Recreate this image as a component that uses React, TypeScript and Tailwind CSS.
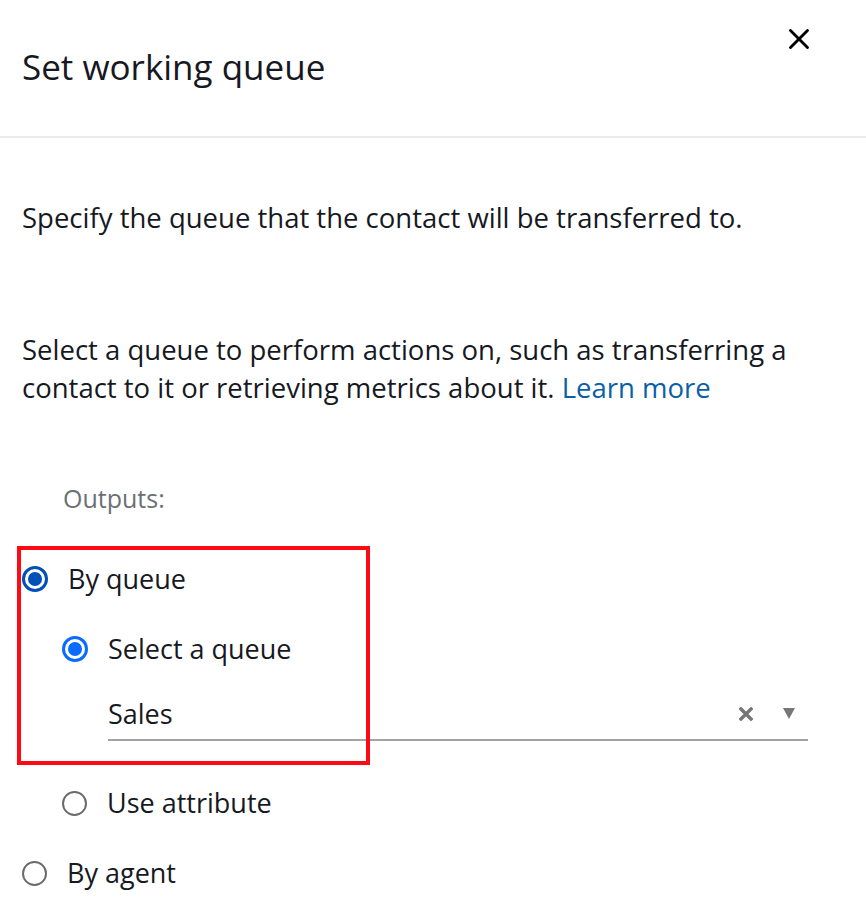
import { X } from "lucide-react";

function Radio({ checked, tone }: { checked?: boolean; tone?: "dark" | "bright" }) {
  if (!checked) {
    return <span className="block w-[25px] h-[25px] rounded-full border-2 border-[#6b6b6b] bg-white" />;
  }
  const ring = tone === "dark" ? "border-[#0050b8]" : "border-[#0a6cff]";
  const dot = tone === "dark" ? "bg-[#0050b8]" : "bg-[#0a6cff]";
  return (
    <span className={`flex items-center justify-center w-[26px] h-[26px] rounded-full border-[3px] ${ring} bg-white`}>
      <span className={`block w-[14px] h-[14px] rounded-full ${dot}`} />
    </span>
  );
}

export default function App() {
  return (
    <div className="relative w-[866px] h-[922px] bg-white text-[#16191f] overflow-hidden" style={{ fontFamily: '"Open Sans", "Noto Sans", sans-serif' }}>
      {/* header */}
      <div className="relative h-[138px] border-b-2 border-[#eaeaea] px-[22px] pt-[45px]">
        <h1 className="text-[35px] leading-[44px] font-normal">Set working queue</h1>
        <button className="absolute top-[22px] right-[50px] text-black" aria-label="Close">
          <X size={34} strokeWidth={2} />
        </button>
      </div>

      <div className="px-[22px]">
        <p className="mt-[61px] text-[27.5px] leading-[38px]">Specify the queue that the contact will be transferred to.</p>

        <p className="mt-[94px] text-[27.5px] leading-[38px]">
          Select a queue to perform actions on, such as transferring a contact to it or retrieving metrics about it.{" "}
          <a href="#" className="text-[#0a5fa6]">Learn more</a>
        </p>

        <div className="mt-[76px] pl-[41px] text-[25px] leading-[30px] text-[#6b7075]">Outputs:</div>

        <div className="mt-[46px] flex flex-col">
          <label className="flex items-center h-[40px] gap-[20px]">
            <Radio checked tone="dark" />
            <span className="text-[27px]">By queue</span>
          </label>

          <label className="mt-[30px] flex items-center h-[40px] gap-[20px] pl-[40px]">
            <Radio checked tone="bright" />
            <span className="text-[27px]">Select a queue</span>
          </label>

          <div className="mt-[20px] ml-[86px] w-[700px] h-[52px] flex items-center border-b-2 border-[#a3a3a3]">
            <span className="flex-1 text-[27px]">Sales</span>
            <svg width="14" height="14" viewBox="0 0 14 14" className="mr-[30px]">
              <path d="M2 2 L12 12 M12 2 L2 12" stroke="#777" strokeWidth="3.4" strokeLinecap="square" />
            </svg>
            <svg width="12" height="11" viewBox="0 0 12 11" className="mr-[13px] mb-[2px]">
              <path d="M0 0 H12 L6 11 Z" fill="#777" />
            </svg>
          </div>

          <label className="mt-[42px] flex items-center h-[40px] gap-[20px] pl-[40px]">
            <Radio />
            <span className="text-[27px]">Use attribute</span>
          </label>

          <label className="mt-[30px] flex items-center h-[40px] gap-[20px]">
            <Radio />
            <span className="text-[27px]">By agent</span>
          </label>
        </div>
      </div>

      {/* annotation box */}
      <div className="absolute left-[17px] top-[546px] w-[353px] h-[219px] border-4 border-[#ff0a14] pointer-events-none" />
    </div>
  );
}
